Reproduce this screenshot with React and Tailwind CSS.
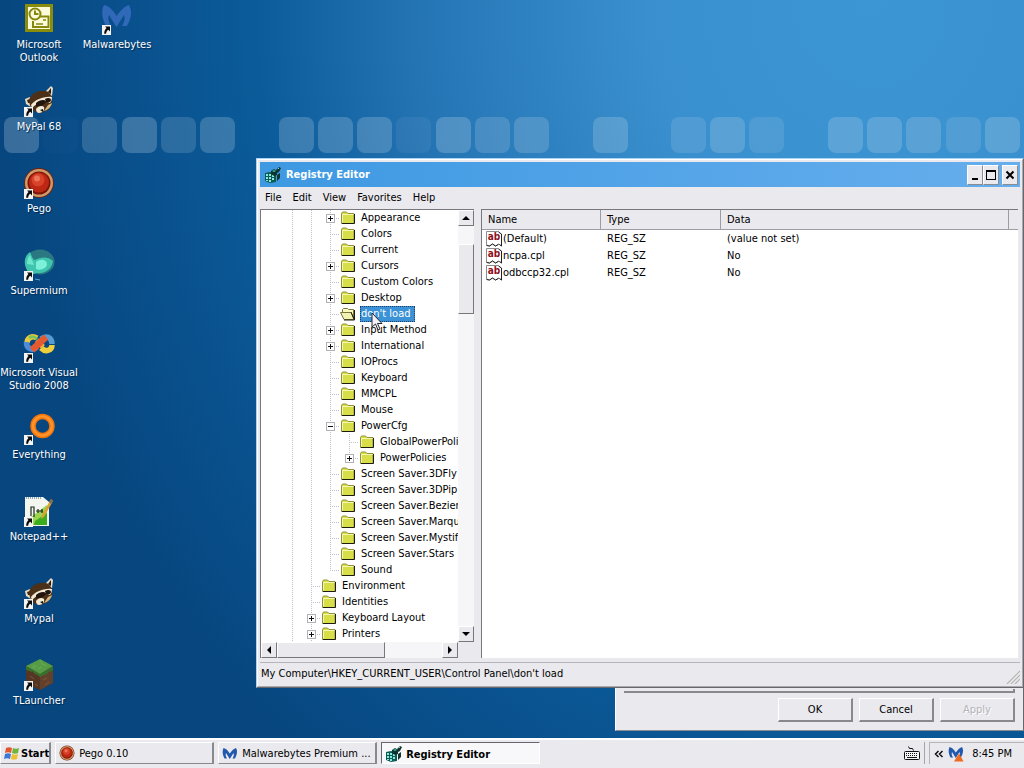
import React from "react";

const ALPHA = [26, 2, 20, 26, 18, 24, 0, 24, 24, 24, 8, 26, 20, 22, 0, 24, 0, 16, 22, 14, 0, 24, 24, 22, 16, 24];

function Shortcut() {
  return (
    <g>
      <rect x="1" y="22" width="9" height="10" fill="#f4f4f4" />
      <path d="M4 23.500h5v5l-1.700-1.700c-1.500 1-2 2-2.200 4H3.200c0-2.600.7-4.200 2.300-5.800z" fill="#0a0a0a" />
    </g>
  );
}

function Raccoon() {
  return (
    <g>
      <path d="M22 7L28 1l2 2-1 8z" fill="#e8dcc4" />
      <path d="M25 7l3-4 0 6z" fill="#2a1a10" />
      <path d="M2 14l5-2 3 4-2 6-5-3z" fill="#e8dcc4" />
      <path d="M4 15l3-1 1 4-3 0z" fill="#3a2616" />
      <path d="M6 15C8 8 16 5 22 6c5 0 8 6 7 12-1 6-7 9-12 10C11 28 6 22 6 15z" fill="#4c3018" />
      <path d="M8 20c4-5 12-9 21-8 0 3-1 5-2 6-7-3-13 0-18 5z" fill="#f3ead6" />
      <path d="M13 18c3-3 8-4 10-2 0 3-6 6-10 5z" fill="#21150e" />
      <path d="M22 14c3-2 6-1 6 1 0 2-3 3-5 2z" fill="#21150e" />
      <path d="M13 24c2-3 6-4 8-2 1 3-2 6-5 6-2 0-3-2-3-4z" fill="#f3ead6" />
      <path d="M17 25l3-1 0 3z" fill="#111" />
      <path d="M25 20l4-2c-1 4-4 7-8 8z" fill="#d9b77e" />
    </g>
  );
}

function Wings({ fill = "#3069b8" }) {
  return <path d="M3 2C8 3 12 7 15.500 13 20 7 24 3 28 2c3 5 3 12-2 21h-5c3-5 3-8 2-11l-7.500 12L8 12c-1 3-1 6 2 11H5C1 16 0 8 3 2z" fill={fill} />;
}

function Orb() {
  return (
    <g>
      <circle cx="16" cy="16" r="15" fill="#6d2412" />
      <circle cx="16" cy="16" r="14" fill="#cf9a68" />
      <circle cx="16" cy="16" r="11.500" fill="#7c1508" />
      <circle cx="16" cy="15.500" r="10" fill="#bd2814" />
      <circle cx="15" cy="13" r="6.500" fill="#d8432a" />
      <circle cx="14" cy="11.500" r="3" fill="#ec7458" />
    </g>
  );
}

function DesktopArt({ kind }) {
  return (
    <svg viewBox="0 0 32 32" className="h-8 w-8 shrink-0" aria-hidden="true">
      {kind === "outlook" && (
        <g>
          <rect x="2" y="1" width="28" height="28" fill="#8a8d0c" />
          <rect x="5" y="4" width="22" height="22" fill="#fbfbdc" />
          <g fill="none" stroke="#85880c" strokeWidth="2">
            <circle cx="12" cy="11" r="5.500" />
            <path d="M12 7.500V11h3.500M17 13.500h8.500V24H10v-6" />
            <path d="M13 21h7M20 17h3" strokeWidth="1.500" />
          </g>
        </g>
      )}
      {kind === "malwarebytes" && <Wings />}
      {kind === "raccoon" && <Raccoon />}
      {kind === "orb" && <Orb />}
      {kind === "supermium" && (
        <g>
          <ellipse cx="17" cy="13" rx="14.500" ry="12.500" fill="#2b7882" />
          <path d="M3 19C0 11 3 6 7 3c2 4 2 7 5 8 5-3 13-4 18 1-1 9-9 13-17 12-5 3-8 0-10-5z" fill="#3fc4ad" />
          <path d="M13 13c5-4 11-2 11 2s-6 7-11 5z" fill="#7cf0d8" />
          <path d="M4 15c0-4 1-7 3-9 1 4 3 6 4 10z" fill="#6ee6cb" />
          <path d="M12 30l5 1" stroke="#59a7c9" />
        </g>
      )}
      {kind === "vs" && (
        <g fill="none" strokeWidth="5.500">
          <path d="M14 7C9 4 4 7 4 12" stroke="#e9c83f" />
          <path d="M3.500 11C3 18 10 20 14 16" stroke="#4d8dd8" />
          <path d="M18 17c5 5 11 2 11-3" stroke="#f0cf3e" />
          <path d="M29 13c0-7-6-9-11-5" stroke="#579bd5" />
          <path d="M14 8c-3-3-5-3-8-1" stroke="#7ac45b" strokeWidth="3" />
          <path d="M14 9l6 7" stroke="#f0b03e" strokeWidth="5" />
          <path d="M9 19L23 6" stroke="#e4592f" strokeWidth="6.500" />
        </g>
      )}
      {kind === "everything" && (
        <g fill="none">
          <circle cx="19.500" cy="13" r="9.500" stroke="#f0750c" strokeWidth="5.500" />
          <circle cx="19.500" cy="13" r="9.500" stroke="#ff932a" strokeWidth="2.500" />
        </g>
      )}
      {kind === "notepad" && (
        <g>
          <path d="M2 2h18l6 5v24H2z" fill="#f2f6ee" />
          <path d="M8 22L24 10v20H9z" fill="#9bd450" />
          <path d="M12 26l12-8v12H11z" fill="#3cae1e" />
          <path d="M3 3h16" stroke="#8ea8b8" strokeDasharray="1 1" strokeWidth="2" />
          <path d="M8 21v-9h3v10M13 16h4M15 14v4M17 16h3M19 14v4" fill="none" stroke="#1e2b1e" strokeWidth="1.200" />
          <path d="M28 4l2 2-9 16-3 2 1-4z" fill="#dca230" />
          <path d="M28 4l2 2-2 3-2-2z" fill="#7e6f54" />
        </g>
      )}
      {kind === "block" && (
        <g>
          <path d="M3 7L17 1l13 6v17l-13 7L3 25z" fill="#553524" />
          <path d="M17 15l13-7v16l-13 7z" fill="#63402b" />
          <path d="M3 7l14 8 13-8v4l-3 2v-1l-4 4v-1l-6 3-4-3v1l-4-4v1L3 11z" fill="#386f2c" />
          <path d="M3 7L17 0l13 7-13 8z" fill="#569b45" />
          <path d="M10 6l4 2M18 4l5 3M15 10l4-2M9 8l3 1M17 2l2 1" stroke="#78b765" strokeOpacity=".6" />
          <path d="M20 21l4-2M22 26l4-3M7 17l4 3M12 25l3 2" stroke="#8a6144" strokeOpacity=".7" />
        </g>
      )}
      {kind !== "outlook" && <Shortcut />}
    </svg>
  );
}

const COLUMNS = [
  [
    ["outlook", "Microsoft Outlook"],
    ["raccoon", "MyPal 68"],
    ["orb", "Pego"],
    ["supermium", "Supermium"],
    ["vs", "Microsoft Visual Studio 2008"],
    ["everything", "Everything"],
    ["notepad", "Notepad++"],
    ["raccoon", "Mypal"],
    ["block", "TLauncher"],
  ],
  [["malwarebytes", "Malwarebytes"]],
];

function RegIcon() {
  return (
    <svg viewBox="0 0 16 16" className="h-4 w-4 shrink-0" aria-hidden="true">
      <path d="M0 6l5-1 6 2v8l-6 1-5-2z" fill="#0e5a54" />
      <path d="M1 7h2v2H1zM4 7h2v2H4zM7 8h2v2H7zM1 10h2v2H1zM4 10h2v2H4zM7 11h2v2H7zM1 13h2v1H1zM4 13h2v2H4z" fill="#8ae8dc" />
      <path d="M6 4l3-2 3 2v4L9 9 6 7z" fill="#0b3431" />
      <path d="M7 4l2-1 2 1-2 1z" fill="#3dbcab" />
      <path d="M11 3l3-3 2 1-2 4-2 1zM12 8l3-2v5l-3 3z" fill="#15332c" />
      <path d="M13 2l1-1" stroke="#7be0d0" />
    </svg>
  );
}

function Folder({ open }) {
  return (
    <svg viewBox="0 0 16 16" className="h-4 w-4 shrink-0" aria-hidden="true">
      {open ? (
        <g>
          <path d="M2.500 6V3.500l1-1h4l1 1h5V13H4z" fill="#fbf9c0" stroke="#77773a" />
          <path d="M.500 6.500h10.500l3 7H4z" fill="#f2f2b4" stroke="#77773a" />
          <path d="M11 6l3 7M14.500 4v10H4" fill="none" stroke="#1c1c12" />
        </g>
      ) : (
        <g>
          <path d="M1.500 13.500v-10l1-1.500h4l1.500 1.500h6v10z" fill="#d8de48" stroke="#8f8f38" />
          <path d="M2.500 12.500v-8h11" fill="none" stroke="#f4f6b4" />
          <path d="M14.500 4v9.500H2" fill="none" stroke="#1c1c12" />
        </g>
      )}
    </svg>
  );
}

/* Guides per row: v = through line, t = branch, l = last branch, p = plus, q = last plus, m = minus */
const TREE = [
  ["vvp", "Appearance"],
  ["vvt", "Colors"],
  ["vvt", "Current"],
  ["vvp", "Cursors"],
  ["vvt", "Custom Colors"],
  ["vvp", "Desktop"],
  ["vvt", "don't load"],
  ["vvp", "Input Method"],
  ["vvp", "International"],
  ["vvt", "IOProcs"],
  ["vvt", "Keyboard"],
  ["vvt", "MMCPL"],
  ["vvt", "Mouse"],
  ["vvm", "PowerCfg"],
  ["vvvt", "GlobalPowerPoli"],
  ["vvvq", "PowerPolicies"],
  ["vvt", "Screen Saver.3DFly"],
  ["vvt", "Screen Saver.3DPip"],
  ["vvt", "Screen Saver.Bezier"],
  ["vvt", "Screen Saver.Marqu"],
  ["vvt", "Screen Saver.Mystif"],
  ["vvt", "Screen Saver.Stars"],
  ["vvl", "Sound"],
  ["vt", "Environment"],
  ["vt", "Identities"],
  ["vp", "Keyboard Layout"],
  ["vp", "Printers"],
];

function Guide({ kind }) {
  const box = kind === "p" || kind === "q" || kind === "m";
  const last = kind === "l" || kind === "q";
  return (
    <svg viewBox="0 0 19 16" className="h-4 w-[19px] shrink-0" shapeRendering="crispEdges" aria-hidden="true">
      <g stroke="#c0c0ca" strokeDasharray="1 1">
        <path d={last ? "M9.500 0v8" : "M9.500 0v16"} />
        {kind !== "v" && <path d="M9 8.500h10" />}
      </g>
      {box && <rect x="5.500" y="4.500" width="8" height="8" fill="#fff" stroke="#b0b0b6" />}
      {box && <path d={kind === "m" ? "M7 8.500h5" : "M7 8.500h5M9.500 6v5"} stroke="#101010" />}
    </svg>
  );
}

const raised = "border border-t-white border-l-white border-r-[#77777c] border-b-[#77777c] bg-[#eae9ed]";

function ScrollButton({ label, d }) {
  return (
    <button type="button" aria-label={label} className={`flex h-4 w-4 shrink-0 items-center justify-center ${raised}`}>
      <svg viewBox="0 0 8 8" className="h-2 w-2" aria-hidden="true"><path d={d} fill="#000" /></svg>
    </button>
  );
}

function TreePane() {
  return (
    <div className="flex w-[214px] shrink-0 flex-col border-t border-l border-[#77777c] bg-white">
      <div className="flex">
        <ul className="min-w-0 flex-1 overflow-hidden pl-[22px]">
          {TREE.map(([guides, name]) => {
            const selected = name === "don't load";
            return (
              <li key={name} className="flex h-4 items-center whitespace-nowrap">
                {guides.split("").map((g, i) => <Guide key={i} kind={g} />)}
                <Folder open={selected} />
                <span className={`ml-1 h-4 px-px leading-4 ${selected ? "bg-[#3c92d6] pr-1 text-white outline-1 -outline-offset-1 outline-dotted outline-[#1c3f66]" : ""}`}>{name}</span>
              </li>
            );
          })}
        </ul>
        <div className="flex w-4 shrink-0 flex-col bg-[#f6f5f8]">
          <ScrollButton label="Scroll up" d="M0 6l4-4 4 4z" />
          <div className="flex-1 pt-[18px]"><div className={`h-[70px] ${raised}`} /></div>
          <ScrollButton label="Scroll down" d="M0 2l4 4 4-4z" />
        </div>
      </div>
      <div className="flex h-4 bg-[#f6f5f8]">
        <ScrollButton label="Scroll left" d="M6 0L2 4l4 4z" />
        <div className="flex-1"><div className={`h-4 w-[108px] ${raised}`} /></div>
        <ScrollButton label="Scroll right" d="M2 0l4 4-4 4z" />
        <div className="w-4 bg-[#eae9ed]" />
      </div>
    </div>
  );
}

const VALUES = [
  ["(Default)", "(value not set)"],
  ["ncpa.cpl", "No"],
  ["odbccp32.cpl", "No"],
];

function StringIcon() {
  return (
    <span className="relative h-4 w-4 shrink-0">
      <svg viewBox="0 0 16 16" className="h-4 w-4" aria-hidden="true">
        <path d="M.500 14V.500h12l3 3V15l-3-2-3 2-3-2-3 2z" fill="#fff" stroke="#8b8b92" />
        <path d="M12.500 1l3 2V15l-2-1.500M.500 14.500l3 .500 3-2 3 2 3-1.500" fill="none" stroke="#222" />
      </svg>
      <b className="absolute inset-x-0 top-0 text-center text-[10px] leading-3 text-[#8e0f1c]" aria-hidden="true">ab</b>
    </span>
  );
}

function ValuePane() {
  const th = "border-r border-b border-[#9c9ca2] bg-[#eae9ed] pl-[6px] text-left font-normal";
  return (
    <div className="mr-[2px] min-w-0 flex-1 border-t border-l border-[#77777c] bg-white pb-px">
      <table className="w-full table-fixed border-separate border-spacing-0">
        <colgroup>
          <col className="w-[119px]" /><col className="w-[120px]" /><col /><col className="w-[9px]" />
        </colgroup>
        <thead>
          <tr className="h-5">
            <th className={th}>Name</th><th className={th}>Type</th><th className={th}>Data</th>
            <td className="border-b border-[#9c9ca2] bg-[#eae9ed]" />
          </tr>
        </thead>
        <tbody>
          {VALUES.map(([name, data]) => (
            <tr key={name} className="h-[17px]">
              <td className="p-0 pl-1"><span className="flex items-center gap-px">
                <StringIcon />{name}</span></td>
              <td className="p-0 pl-[6px]">REG_SZ</td>
              <td className="p-0 pl-[6px]" colSpan={2}>{data}</td>
            </tr>
          ))}
        </tbody>
      </table>
    </div>
  );
}

function CaptionButton({ label, children }) {
  return (
    <button type="button" aria-label={label} className="flex h-5 w-4 items-center justify-center border border-t-white border-l-white border-r-[#8b8b92] border-b-[#8b8b92] bg-[#eae9ed]">
      <svg viewBox="0 0 12 12" className="h-3 w-3 shrink-0" aria-hidden="true">{children}</svg>
    </button>
  );
}

function RegistryWindow() {
  return (
    <section aria-label="Registry Editor" className="absolute top-[158px] right-0 left-64 border border-t-[#a9d3f4] border-r-[#66666c] border-b-[#66666c] border-l-[#a9d3f4] bg-[#eae9ed]">
      <div className="border border-t-white border-r-[#a9a9ae] border-b-[#a9a9ae] border-l-white p-[2px]">
        <header className="flex h-[25px] items-center bg-linear-to-r from-[#3d99e2] to-[#66aeed] pr-[2px] pl-[5px]">
          <RegIcon />
          <h1 className="ml-[5px] flex-1 font-bold text-white">Registry Editor</h1>
          <CaptionButton label="Minimize"><path d="M3 9h6v2H3z" /></CaptionButton>
          <CaptionButton label="Maximize"><path d="M1 1h10v10H1zM2 3v7h8V3z" fillRule="evenodd" /></CaptionButton>
          <span className="w-[3px]" />
          <CaptionButton label="Close"><path d="M2.500 2.500l7 7M9.500 2.500l-7 7" stroke="#000" strokeWidth="2" /></CaptionButton>
        </header>
        <nav className="flex h-[22px] items-center gap-[11px] pb-[2px] pl-[5px]">
          {["File", "Edit", "View", "Favorites", "Help"].map((m) => <button key={m} type="button">{m}</button>)}
        </nav>
        <div className="flex gap-[7px]">
          <TreePane />
          <ValuePane />
        </div>
        <footer className="mt-1 flex h-[22px] items-center justify-between border-t border-[#b4b4ba] pl-px">
          <span>My Computer\HKEY_CURRENT_USER\Control Panel\don't load</span>
          <svg viewBox="0 0 14 14" className="h-[14px] w-[14px] self-end" aria-hidden="true">
            <path d="M1 14L14 1M5 14l9-9M9 14l5-5" stroke="#b4b4b0" strokeWidth="1.200" />
          </svg>
        </footer>
      </div>
    </section>
  );
}

function PropertiesDialog() {
  const b = "h-6 w-[75px] border-t border-l border-r-2 border-b-2 border-t-white border-l-white border-r-[#88888d] border-b-[#88888d]";
  return (
    <section aria-label="Properties" className="absolute top-[600px] right-0 left-[615px] border border-t-white border-r-[#66666c] border-b-[#8b8b92] border-l-white bg-[#eae9ed] px-2 pt-[88px] pb-2">
      <div className="h-[4px] border-r-2 border-b-2 border-[#88888d]" />
      <div className="mt-[5px] flex justify-end gap-[6px]">
        <button type="button" className={b}>OK</button>
        <button type="button" className={b}>Cancel</button>
        <button type="button" disabled className={`${b} text-[#b4b3b8] [text-shadow:1px_1px_#fff]`}>Apply</button>
      </div>
    </section>
  );
}

function Taskbar() {
  const frame = "flex h-[22px] min-w-0 items-center border-t border-l border-r-2 border-b border-t-white border-l-white border-r-[#88888d] border-b-[#88888d]";
  return (
    <footer className="flex h-[30px] shrink-0 items-center border-t-2 border-white bg-[#eae9ed] pb-[2px]">
      <button type="button" className={`${frame} gap-px pl-[3px] font-bold`}>
        <svg viewBox="0 0 16 16" className="h-4 w-4 shrink-0" aria-hidden="true">
          <path d="M2 3c2-1 4-1 6 0L7 8C5 7 3 7 1 8z" fill="#e0562e" />
          <path d="M9 3c2 1 4 1 6 0l-1 5c-2 1-4 1-6 0z" fill="#72b43b" />
          <path d="M1 9c2-1 4-1 6 0l-1 5c-2-1-4-1-6 0z" fill="#3f78d4" />
          <path d="M8 9c2 1 4 1 6 0l-1 5c-2 1-4 1-6 0z" fill="#eec02f" />
        </svg>
        Start
      </button>
      <nav className="ml-1 flex min-w-0 flex-1 gap-1">
        <button type="button" className={`${frame} w-[159px] gap-1 px-[3px]`}>
          <svg viewBox="0 0 32 32" className="h-4 w-4 shrink-0" aria-hidden="true"><Orb /></svg>Pego 0.10
        </button>
        <button type="button" className={`${frame} w-[159px] gap-1 px-[3px]`}>
          <svg viewBox="0 0 32 26" className="h-[13px] w-4 shrink-0" aria-hidden="true"><Wings fill="#2159ae" /></svg>
          <span className="whitespace-nowrap">Malwarebytes Premium ...</span>
        </button>
        <button type="button" aria-pressed="true" className="flex h-[22px] w-[159px] items-center gap-1 border border-t-[#66666c] border-r-white border-b-white border-l-[#66666c] bg-[#f8f8fa] px-1 pt-[2px] font-bold">
          <RegIcon />Registry Editor
        </button>
      </nav>
      <div className="flex items-center">
        <svg viewBox="0 0 16 16" className="h-4 w-4" role="img" aria-label="Keyboard">
          <path d="M4.500 1.500l1 2h3l1 2" fill="none" stroke="#111" />
          <rect x=".500" y="6.500" width="15" height="8" rx="1" fill="#f4f4f4" stroke="#111" />
          <path d="M2 8.500h12M2 10.500h12" stroke="#111" strokeDasharray="1 1" />
          <path d="M3 12.500h10" stroke="#111" />
        </svg>
        <span className="ml-1 h-[22px] w-px bg-[#a4a4aa]" />
        <div className="ml-1 flex h-[22px] items-center border-t border-l border-[#b4b4ba] pr-3 pl-1">
          <button type="button" aria-label="Show hidden icons" className="w-[14px]">
            <svg viewBox="0 0 10 8" className="h-2 w-[10px]" aria-hidden="true"><path d="M4.500 1l-3 3 3 3M8.500 1l-3 3 3 3" fill="none" stroke="#111" strokeWidth="1.500" /></svg>
          </button>
          <svg viewBox="0 0 32 32" className="h-4 w-4" role="img" aria-label="Malwarebytes">
            <Wings fill="#2159ae" />
            <path d="M22 15l9 16H12z" fill="#ee6a1e" />
          </svg>
          <time className="ml-2 whitespace-nowrap">8:45 PM</time>
        </div>
      </div>
    </footer>
  );
}

export default function App() {
  return (
    <div className="flex h-screen flex-col overflow-hidden font-['DejaVu_Sans_Condensed','DejaVu_Sans',sans-serif] text-[11px] leading-[13px] text-black">
      <main className="relative min-h-0 flex-1 overflow-hidden bg-[#07467f] bg-[radial-gradient(ellipse_880px_1000px_at_85%_0%,#3c96d4_0%,#3a90ce_25%,#2474b4_52%,#0b5b9a_70%,#07467f_100%)]">
        <div className="absolute inset-x-1 top-[117px] flex justify-between">
          {ALPHA.map((a, i) => (
            <span key={i} className="h-9 w-[35px] rounded-lg bg-[#c8dcea]" style={{ opacity: a / 100 }} />
          ))}
        </div>
        <div className="relative flex h-full">
          {COLUMNS.map((items, c) => (
            <ul key={c} className="w-[78px]">
              {items.map(([kind, name]) => (
                <li key={name} className="h-[82px] pt-[3px]">
                  <a href="#" className="-mx-1 flex flex-col items-center text-center text-white [text-shadow:1px_1px_1px_#042a50]">
                    <DesktopArt kind={kind} />
                    <span className="mt-[3px]">{name}</span>
                  </a>
                </li>
              ))}
            </ul>
          ))}
        </div>
        <PropertiesDialog />
        <RegistryWindow />
        <svg viewBox="0 0 12 19" className="absolute top-[312px] left-[371px] h-[19px] w-3" aria-hidden="true">
          <path d="M1 1v14l3.500-3 2.500 6 2-1-2.500-5.500H11z" fill="#f2f2f6" stroke="#26262e" />
        </svg>
      </main>
      <Taskbar />
    </div>
  );
}
